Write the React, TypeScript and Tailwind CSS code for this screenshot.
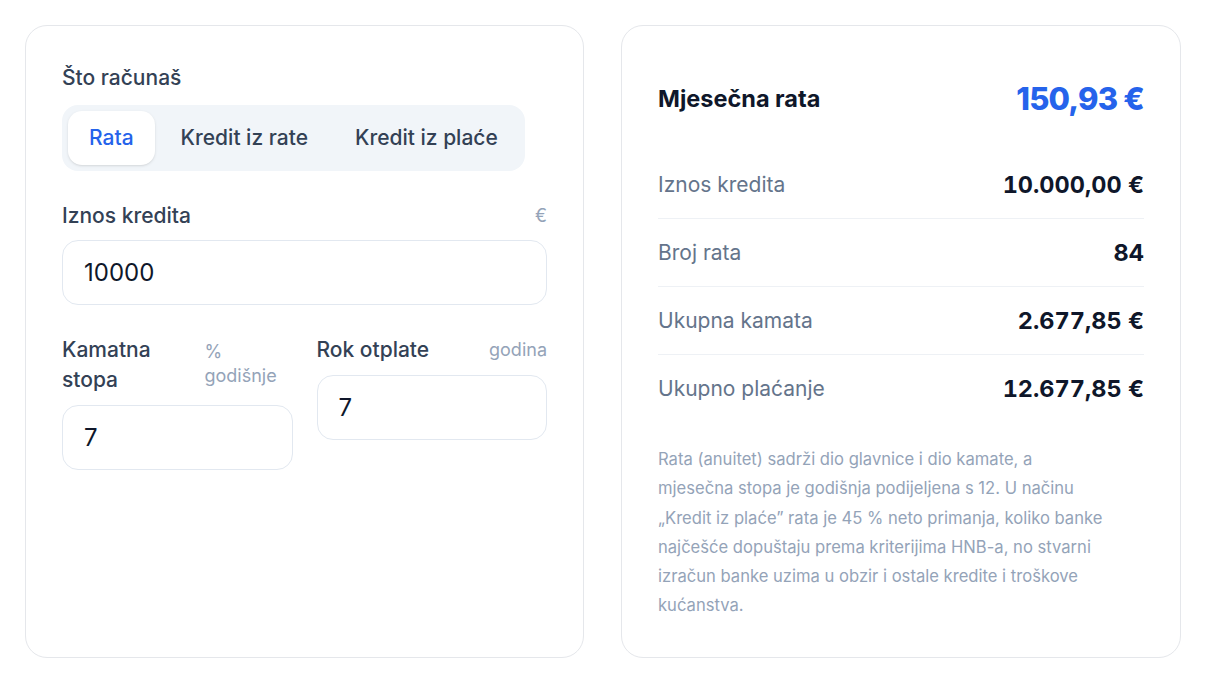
import React from "react";

const font = { fontFamily: "Inter, 'Noto Sans', sans-serif" };

function Row({ label, value, last }: { label: string; value: string; last?: boolean }) {
  return (
    <div className={`flex items-center justify-between h-[68px] ${last ? "" : "border-b border-[#eef1f5]"}`}>
      <span className="text-[21px] text-[#64748b]">{label}</span>
      <span className="text-[23.5px] font-bold tabular-nums text-[#0f172a]">{value}</span>
    </div>
  );
}

export default function App() {
  return (
    <div className="bg-white min-h-screen pt-[25px] pl-[25px]" style={font}>
      <div className="grid grid-cols-[559px_560px] gap-[37px]">
        {/* Left card */}
        <div className="rounded-[22px] border border-[#e5e7eb] bg-white px-9 pt-[37px] pb-9 flex flex-col gap-[30px]">
          <div>
            <div className="text-[21px] leading-[30px] font-medium text-[#334155] mb-3">Što računaš</div>
            <div className="inline-flex gap-[5px] rounded-2xl bg-[#f1f5f9] p-1.5">
              <button className="h-[54px] px-[21px] rounded-[14px] bg-white shadow-sm text-[21px] font-medium text-[#2563eb]">Rata</button>
              <button className="h-[54px] px-[21px] rounded-[14px] text-[21px] font-medium text-[#334155]">Kredit iz rate</button>
              <button className="h-[54px] px-[21px] rounded-[14px] text-[21px] font-medium text-[#334155]">Kredit iz plaće</button>
            </div>
          </div>

          <div>
            <div className="flex justify-between items-start mb-[9px]">
              <span className="text-[21px] leading-[30px] font-medium text-[#334155]">Iznos kredita</span>
              <span className="text-[18px] leading-[30px] text-[#94a3b8]">€</span>
            </div>
            <div className="h-[65px] rounded-2xl border border-[#e2e8f0] px-[21px] flex items-center text-[24px] text-[#0f172a]">10000</div>
          </div>

          <div className="grid grid-cols-2 gap-6 items-start">
            <div>
              <div className="flex justify-between items-start mb-[10px]">
                <span className="text-[21px] leading-[30px] font-medium text-[#334155]">Kamatna<br />stopa</span>
                <span className="w-[88px] text-[18px] leading-[24px] pt-[5px] text-[#94a3b8]">%<br />godišnje</span>
              </div>
              <div className="h-[65px] rounded-2xl border border-[#e2e8f0] px-[21px] flex items-center text-[24px] text-[#0f172a]">7</div>
            </div>
            <div>
              <div className="flex justify-between items-start mb-[10px]">
                <span className="text-[21px] leading-[30px] font-medium text-[#334155]">Rok otplate</span>
                <span className="text-[18px] leading-[30px] text-[#94a3b8]">godina</span>
              </div>
              <div className="h-[65px] rounded-2xl border border-[#e2e8f0] px-[21px] flex items-center text-[24px] text-[#0f172a]">7</div>
            </div>
          </div>
        </div>

        {/* Right card */}
        <div className="rounded-[22px] border border-[#e5e7eb] bg-white p-9">
          <div className="flex items-center justify-between h-[74px] mb-[15px]">
            <span className="text-[23.5px] font-bold text-[#0f172a]">Mjesečna rata</span>
            <span className="text-[31px] font-extrabold tracking-tight text-[#2563eb]">150,93 €</span>
          </div>
          <Row label="Iznos kredita" value="10.000,00 €" />
          <Row label="Broj rata" value="84" />
          <Row label="Ukupna kamata" value="2.677,85 €" />
          <Row label="Ukupno plaćanje" value="12.677,85 €" last />
          <p className="mt-[22px] max-w-md text-[16.6px] leading-[29.3px] text-[#94a3b8]">
            Rata (anuitet) sadrži dio glavnice i dio kamate, a mjesečna stopa je godišnja podijeljena s 12. U načinu „Kredit iz plaće” rata je 45 % neto primanja, koliko banke najčešće dopuštaju prema kriterijima HNB-a, no stvarni izračun banke uzima u obzir i ostale kredite i troškove kućanstva.
          </p>
        </div>
      </div>
    </div>
  );
}
